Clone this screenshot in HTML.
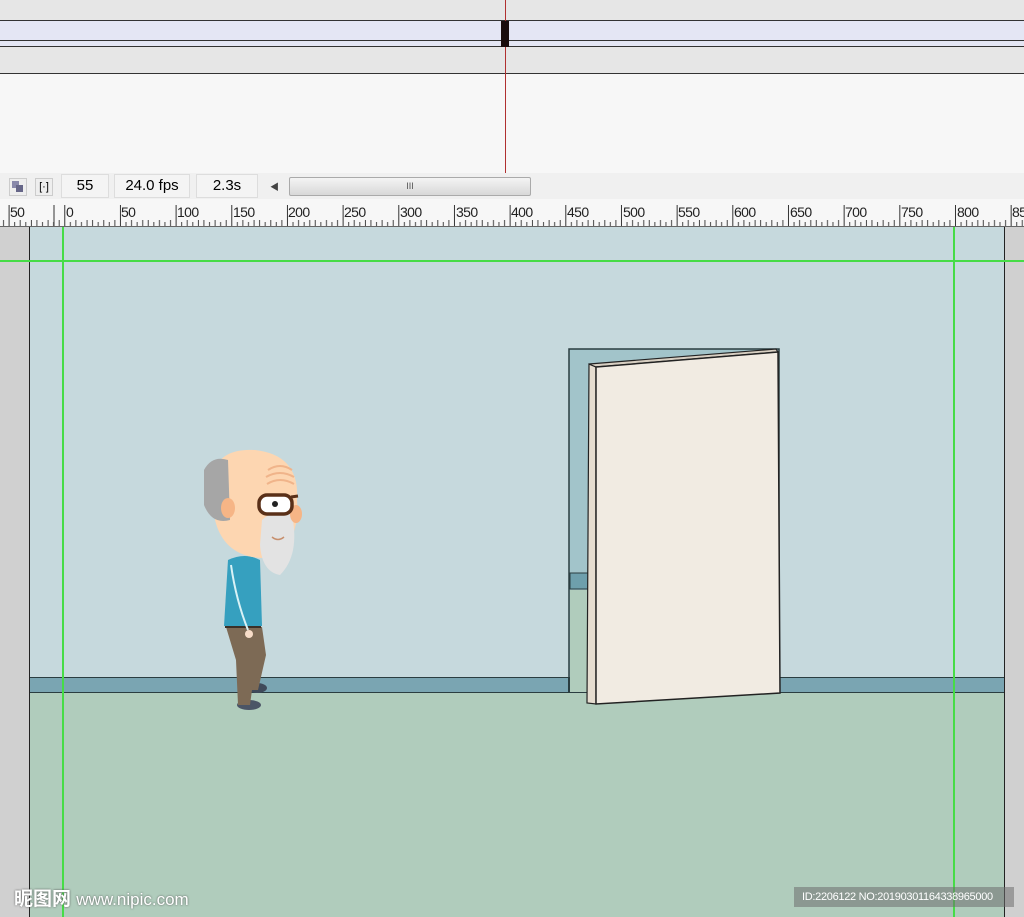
<!DOCTYPE html>
<html><head><meta charset="utf-8"><style>
*{margin:0;padding:0}
body{width:1024px;height:917px;overflow:hidden;position:relative;background:#f7f7f7;font-family:"Liberation Sans","Noto Sans CJK SC",sans-serif}
.a{position:absolute}
.rl{position:absolute;top:204px;font-size:14px;color:#222;letter-spacing:-0.6px}
.g{position:absolute;background:#46dc46}
</style></head><body>
<!-- timeline -->
<div class="a" style="left:0;top:0;width:1024px;height:73px;background:#e6e6e6"></div>
<div class="a" style="left:0;top:20px;width:1024px;height:26px;background:#e4e6f4"></div>
<div class="a" style="left:0;top:20px;width:1024px;height:1px;background:#333"></div>
<div class="a" style="left:0;top:40px;width:1024px;height:1px;background:#333"></div>
<div class="a" style="left:0;top:46px;width:1024px;height:1px;background:#333"></div>
<div class="a" style="left:0;top:73px;width:1024px;height:1px;background:#333"></div>
<div class="a" style="left:505px;top:0;width:1px;height:174px;background:#b03030"></div>
<div class="a" style="left:501px;top:21px;width:8px;height:26px;background:#1a0d0d"></div>
<!-- toolbar -->
<div class="a" style="left:0;top:173px;width:1024px;height:26px;background:#f0f0f0"></div>
<div class="a" style="left:9px;top:178px;width:16px;height:16px;border:1px solid #ccc;background:#eee"><div class="a" style="left:2px;top:2px;width:7px;height:7px;background:#88a"></div><div class="a" style="left:6px;top:6px;width:7px;height:7px;background:#668"></div></div>
<div class="a" style="left:35px;top:178px;width:16px;height:16px;border:1px solid #ccc;background:#eee;font-size:11px;text-align:center;line-height:16px">[·]</div>
<div class="a" style="left:61px;top:174px;width:46px;height:22px;border:1px solid #ddd;background:#f4f4f4;font-size:15px;line-height:22px;text-align:center">55</div>
<div class="a" style="left:114px;top:174px;width:74px;height:22px;border:1px solid #ddd;background:#f4f4f4;font-size:15px;line-height:22px;text-align:center">24.0 fps</div>
<div class="a" style="left:196px;top:174px;width:60px;height:22px;border:1px solid #ddd;background:#f4f4f4;font-size:15px;line-height:22px;text-align:center">2.3s</div>
<div class="a" style="left:270px;top:180px;font-size:9px;color:#444">◀</div>
<div class="a" style="left:289px;top:177px;width:240px;height:17px;border:1px solid #aaa;border-radius:2px;background:linear-gradient(#f4f4f4,#d8d8d8);font-size:9px;text-align:center;line-height:17px;color:#555">III</div>
<!-- ruler -->
<div class="a" style="left:0;top:199px;width:1024px;height:27px;background:#f7f7f7;border-bottom:1px solid #666"></div>
<svg class="a" style="left:0;top:199px" width="1024" height="27">
<defs><pattern id="p" x="8.6" y="0" width="55.67" height="27" patternUnits="userSpaceOnUse">
<line x1="0.5" y1="6" x2="0.5" y2="27" stroke="#333"/>
<line x1="6.07" y1="23" x2="6.07" y2="27" stroke="#444"/>
<line x1="11.6" y1="21" x2="11.6" y2="27" stroke="#444"/>
<line x1="17.2" y1="23" x2="17.2" y2="27" stroke="#444"/>
<line x1="22.8" y1="21" x2="22.8" y2="27" stroke="#444"/>
<line x1="28.3" y1="21" x2="28.3" y2="27" stroke="#444"/>
<line x1="33.9" y1="23" x2="33.9" y2="27" stroke="#444"/>
<line x1="39.5" y1="21" x2="39.5" y2="27" stroke="#444"/>
<line x1="45" y1="23" x2="45" y2="27" stroke="#444"/>
<line x1="50.6" y1="21" x2="50.6" y2="27" stroke="#444"/>
</pattern></defs>
<rect width="1024" height="27" fill="url(#p)"/>
<line x1="54" y1="6" x2="54" y2="27" stroke="#333"/>
</svg>
<span class="rl" style="left:10px">50</span>
<span class="rl" style="left:66px">0</span>
<span class="rl" style="left:121px">50</span>
<span class="rl" style="left:177px">100</span>
<span class="rl" style="left:233px">150</span>
<span class="rl" style="left:288px">200</span>
<span class="rl" style="left:344px">250</span>
<span class="rl" style="left:400px">300</span>
<span class="rl" style="left:456px">350</span>
<span class="rl" style="left:511px">400</span>
<span class="rl" style="left:567px">450</span>
<span class="rl" style="left:623px">500</span>
<span class="rl" style="left:678px">550</span>
<span class="rl" style="left:734px">600</span>
<span class="rl" style="left:790px">650</span>
<span class="rl" style="left:845px">700</span>
<span class="rl" style="left:901px">750</span>
<span class="rl" style="left:957px">800</span>
<span class="rl" style="left:1012px">85</span>
<!-- canvas -->
<div class="a" style="left:0;top:227px;width:1024px;height:690px;background:#d0d0d0"></div>
<div class="a" style="left:29px;top:227px;width:974px;height:690px;background:#c6d9dd;border-left:1px solid #222;border-right:1px solid #222"></div>
<div class="a" style="left:30px;top:692px;width:974px;height:225px;background:#b0ccbc"></div>
<div class="a" style="left:30px;top:677px;width:974px;height:14px;background:#7aa5b2;border-top:1px solid #2a3d40;border-bottom:1px solid #2a3d40"></div>
<svg class="a" style="left:0;top:0" width="1024" height="917">
<rect x="569" y="349" width="210" height="343" fill="#a2c4ca" stroke="#2a3d40" stroke-width="1.5"/>
<rect x="570" y="573" width="20" height="16" fill="#6e9fac" stroke="#2a3d40"/>
<rect x="570" y="590" width="20" height="102" fill="#b0ccbc"/>
<line x1="569" y1="677" x2="569" y2="693" stroke="#2a3d40" stroke-width="2"/>
<polygon points="589,364 596,367 596,704 587,703" fill="#e6ddd0" stroke="#222" stroke-width="1.2"/>
<polygon points="589,364 776,349 778,352 596,367" fill="#d8cfc2" stroke="#222" stroke-width="1.2"/>
<polygon points="596,367 778,352 780,693 596,704" fill="#f1ebe2" stroke="#222" stroke-width="1.5"/>
<ellipse cx="249" cy="705" rx="12" ry="5" fill="#4b5566"/>
<ellipse cx="257" cy="688" rx="10" ry="5" fill="#3f4a5a"/>
<path d="M226,627 L262,627 L266,655 L258,690 L252,690 L250,705 L238,705 L236,660 Z" fill="#7d6a55"/>
<rect x="225" y="624" width="36" height="4" fill="#3a3028"/>
<path d="M228,560 Q245,552 260,560 L262,626 L224,626 Z" fill="#36a0bf"/>
<path d="M231,565 Q236,600 248,630" stroke="#d9f2f6" stroke-width="2" fill="none"/>
<circle cx="249" cy="634" r="4" fill="#f7dcc8"/>
<path d="M213,480 Q215,448 255,450 Q300,455 297,500 Q300,545 270,558 Q225,560 215,520 Z" fill="#fdd6b1"/>
<path d="M262,520 Q275,508 292,515 Q300,555 280,575 Q262,572 260,545 Z" fill="#e3e3e3"/>
<path d="M204,470 Q212,455 228,460 L230,520 Q212,525 204,505 Z" fill="#a6a6a6"/>
<ellipse cx="228" cy="508" rx="7" ry="10" fill="#f6b586"/>
<ellipse cx="296" cy="514" rx="6" ry="9" fill="#f6b586"/>
<path d="M268,470 Q280,462 292,470 M266,477 Q280,469 294,477 M267,484 Q280,476 294,484" stroke="#f0b48a" stroke-width="2" fill="none"/>
<rect x="259" y="495" width="33" height="19" rx="8" fill="#fff" stroke="#5a3018" stroke-width="3.5"/>
<line x1="291" y1="497" x2="298" y2="496" stroke="#5a3018" stroke-width="3"/>
<circle cx="275" cy="504" r="3" fill="#222"/>
<path d="M272,537 Q278,542 284,537" stroke="#c78f6d" stroke-width="1.5" fill="none"/>
</svg>
<!-- guides -->
<div class="g" style="left:62px;top:227px;width:2px;height:690px"></div>
<div class="g" style="left:953px;top:227px;width:2px;height:690px"></div>
<div class="g" style="left:0;top:260px;width:1024px;height:2px"></div>
<!-- watermarks -->
<div class="a" style="left:14px;top:884px;font-size:19px;color:#fff;font-weight:bold;text-shadow:0 0 2px #555">昵图网 <span style="font-size:17px;font-weight:normal">www.nipic.com</span></div>
<div class="a" style="left:794px;top:887px;width:220px;height:20px;background:rgba(110,110,110,0.55);color:#fff;font-size:11px;line-height:20px;padding-left:8px;box-sizing:border-box;white-space:nowrap;letter-spacing:-0.3px">ID:2206122 NO:20190301164338965000</div>
</body></html>
